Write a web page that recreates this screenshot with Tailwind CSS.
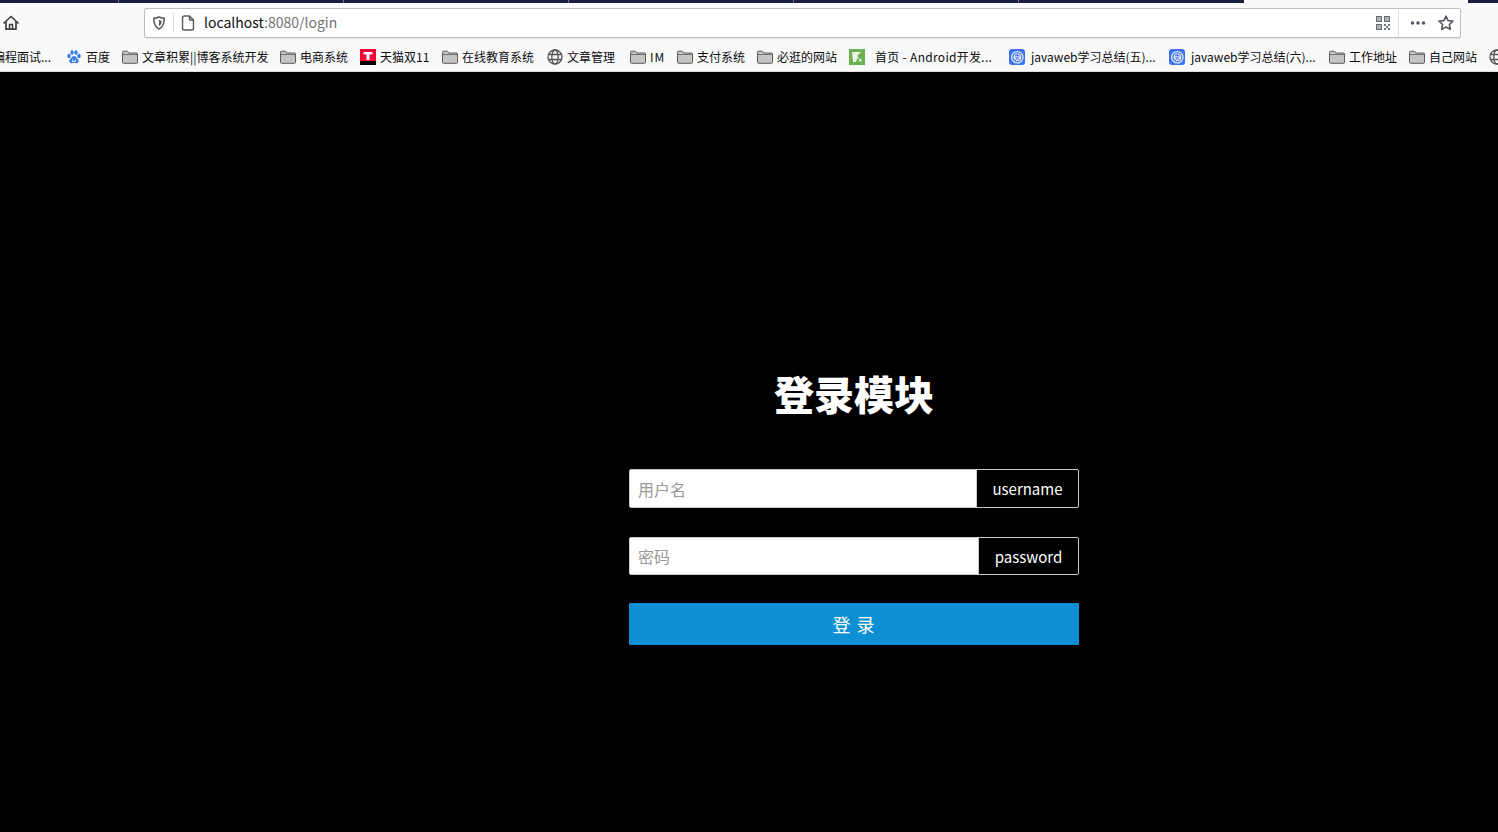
<!DOCTYPE html>
<html lang="zh-CN">
<head>
<meta charset="utf-8">
<title>登录</title>
<script src="https://cdn.jsdelivr.net/npm/@tailwindcss/browser@4"></script>
</head>
<body class="h-[832px] w-[1498px] overflow-hidden bg-black font-['Noto_Sans_CJK_SC','Noto_Sans',sans-serif]">
<svg width="0" height="0" class="absolute">
  <defs>
    <symbol id="folder" viewBox="0 0 16 16"><path d="M.5 3.2q0-1 1-1h4l1.500 1.800h7.500q1 0 1 1v8.300q0 1-1 1h-13q-1 0-1-1z" fill="#c4c4c4" stroke="#5c5c5c"/><path d="M1 5.500h14" stroke="#5c5c5c" stroke-width=".8"/></symbol>
    <symbol id="globe" viewBox="0 0 16 16"><g fill="none" stroke="#555" stroke-width="1.300"><circle cx="8" cy="8" r="7"/><ellipse cx="8" cy="8" rx="3.200" ry="7"/><path d="M1.500 5.500h13M1.500 10.500h13"/></g></symbol>
    <symbol id="blue" viewBox="0 0 16 16"><rect width="16" height="16" rx="3" fill="#3a72ee"/><circle cx="8.300" cy="8.300" r="6.300" fill="#dfe8fb"/><circle cx="8.300" cy="8.300" r="4.500" fill="none" stroke="#3a66d8" stroke-width="1.100"/><path d="M6 6.300h4.600M8.300 4.500v3M6.200 11l4.200-3.500M6.200 8l4.200 3" stroke="#3a66d8" stroke-width=".9" fill="none"/></symbol>
  </defs>
</svg>

<!-- tab strip -->
<div class="flex h-[3px] bg-[#1c1c3c]">
  <div class="w-[119px] border-r border-[#77778f]"></div>
  <div class="w-[225px] border-r border-[#77778f]"></div>
  <div class="w-[225px] border-r border-[#77778f]"></div>
  <div class="w-[225px] border-r border-[#77778f]"></div>
  <div class="w-[225px] border-r border-[#77778f]"></div>
  <div class="w-[225px]"></div>
  <div class="w-[224px] bg-[#f9f9fa]"></div>
</div>

<!-- toolbar -->
<div class="flex h-[39px] items-center bg-[#f9f9fa]">
  <svg class="ml-[3px] size-4" viewBox="0 0 16 16" fill="none" stroke="#3f3f46" stroke-width="1.700" stroke-linejoin="round" stroke-linecap="round"><path d="M1 8l7-6.500L15 8"/><path d="M3 7v7.200h10V7"/><path d="M6.500 14V9.500h3V14" stroke-width="1.500"/></svg>
  <div class="ml-[125px] flex h-[30px] w-[1317px] items-center rounded-[2px] border border-[#bdbdbd] bg-white shadow-[0_1px_1px_rgba(0,0,0,.08)]">
    <svg class="ml-[7px] size-[14px]" viewBox="0 0 16 16" fill="none" stroke="#5b5b66" stroke-width="1.800"><path d="M8 1.200c2 .9 4 1.300 6 1.300 0 6-1.500 10-6 12.300C3.500 12.500 2 8.500 2 2.500c2 0 4-.4 6-1.300z"/><path d="M8 4.500c1 .4 2 .6 3 .6 0 3.200-.8 5.300-3 6.600z" fill="#5b5b66" stroke="none"/></svg>
    <div class="ml-[7px] h-5 w-px bg-[#e0e0e2]"></div>
    <svg class="ml-[6px] size-4" viewBox="0 0 16 16" fill="none" stroke="#5b5b66" stroke-width="1.500" stroke-linejoin="round"><path d="M2.500 3q0-2 2-2h5L13.500 5v8q0 2-2 2h-7q-2 0-2-2z"/><path d="M9.500 1v4h4"/></svg>
    <div class="ml-[8px] pb-[2px] text-[14px] leading-none text-[#0c0c0d]">localhost<span class="text-[#737373]">:8080/login</span></div>
    <svg class="ml-auto size-4" viewBox="0 0 16 16" fill="#6b6f78"><path d="M1 1h6v6H1zm1.500 1.500v3h3v-3zM9 1h6v6H9zm1.500 1.500v3h3v-3zM1 9h6v6H1zm1.500 1.500v3h3v-3z" fill-rule="evenodd"/><path d="M3.300 3.300h1.400v1.400H3.300zM11.300 3.300h1.400v1.400h-1.400zM3.300 11.300h1.400v1.400H3.300zM9 9h2v2H9zM13 9h2v2h-2zM11 11h2v2h-2zM9 13h2v2H9zM13 13h2v2h-2z"/></svg>
    <div class="ml-[7px] h-[26px] w-px bg-[#e0e0e2]"></div>
    <svg class="ml-[11px] size-4" viewBox="0 0 16 16" fill="#5b5b66"><circle cx="2.500" cy="8" r="1.800"/><circle cx="8" cy="8" r="1.800"/><circle cx="13.500" cy="8" r="1.800"/></svg>
    <svg class="ml-[12px] mr-[6px] size-4" viewBox="0 0 16 16" fill="none" stroke="#5b5b66" stroke-width="1.700" stroke-linejoin="round"><path d="M8 1.200l2.100 4.400 4.800.6-3.500 3.300.9 4.800L8 12l-4.300 2.300.9-4.800L1.100 6.200l4.800-.6z"/></svg>
  </div>
</div>

<!-- bookmarks -->
<div class="flex h-[30px] items-center overflow-hidden whitespace-nowrap border-b border-[#dcdcdc] bg-[#f9f9fa] text-[12px] leading-none text-[#0c0c0d]">
  <div class="-ml-[7px] w-[73px] shrink-0">编程面试...</div>
  <div class="flex w-[56px] shrink-0 items-center">
    <svg class="mr-[4px] size-4 shrink-0" viewBox="0 0 16 16" fill="#3b7de8"><ellipse cx="3" cy="7" rx="1.700" ry="2.200"/><ellipse cx="6" cy="3.500" rx="1.700" ry="2.300"/><ellipse cx="10" cy="3.500" rx="1.700" ry="2.300"/><ellipse cx="13" cy="7" rx="1.700" ry="2.200"/><path d="M8 7c2 0 2.500 2 4 3.200 1.500 1.300.6 4-1.500 4-1 0-1.700-.4-2.500-.4s-1.500.4-2.500.4c-2.100 0-3-2.700-1.500-4C5.500 9 6 7 8 7z"/><path d="M6.500 10.500v2h3v-2" fill="none" stroke="#fff" stroke-width=".8"/></svg>百度</div>
  <div class="flex w-[158px] shrink-0 items-center"><svg class="mr-[4px] size-4 shrink-0"><use href="#folder"/></svg>文章积累||博客系统开发</div>
  <div class="flex w-[80px] shrink-0 items-center"><svg class="mr-[4px] size-4 shrink-0"><use href="#folder"/></svg>电商系统</div>
  <div class="flex w-[82px] shrink-0 items-center">
    <svg class="mr-[4px] size-4 shrink-0" viewBox="0 0 16 16"><rect width="16" height="16" fill="#ff0036"/><rect y="12" width="16" height="4" fill="#000"/><path d="M3.500 3h9v2.500H9.500V11h-3V5.500h-3z" fill="#fff"/></svg>天猫双11</div>
  <div class="flex w-[105px] shrink-0 items-center"><svg class="mr-[4px] size-4 shrink-0"><use href="#folder"/></svg>在线教育系统</div>
  <div class="flex w-[83px] shrink-0 items-center"><svg class="mr-[4px] size-4 shrink-0"><use href="#globe"/></svg>文章管理</div>
  <div class="flex w-[47px] shrink-0 items-center"><svg class="mr-[4px] size-4 shrink-0"><use href="#folder"/></svg><span class="tracking-[1px]">IM</span></div>
  <div class="flex w-[80px] shrink-0 items-center"><svg class="mr-[4px] size-4 shrink-0"><use href="#folder"/></svg>支付系统</div>
  <div class="flex w-[92px] shrink-0 items-center"><svg class="mr-[4px] size-4 shrink-0"><use href="#folder"/></svg>必逛的网站</div>
  <div class="flex w-[160px] shrink-0 items-center">
    <svg class="mr-[10px] size-4 shrink-0" viewBox="0 0 16 16"><rect width="16" height="16" fill="#6cb14f"/><path d="M3 3h9L8 7l2 2-2 1-1 3-3 0z" fill="#eef5e8"/><rect x="10" y="10" width="2.500" height="2.500" fill="#eef5e8"/></svg><span class="tracking-[.3px]">首页 - Android开发...</span></div>
  <div class="flex w-[160px] shrink-0 items-center"><svg class="mr-[6px] size-4 shrink-0"><use href="#blue"/></svg>javaweb学习总结(五)...</div>
  <div class="flex w-[160px] shrink-0 items-center"><svg class="mr-[6px] size-4 shrink-0"><use href="#blue"/></svg>javaweb学习总结(六)...</div>
  <div class="flex w-[80px] shrink-0 items-center"><svg class="mr-[4px] size-4 shrink-0"><use href="#folder"/></svg>工作地址</div>
  <div class="flex w-[80px] shrink-0 items-center"><svg class="mr-[4px] size-4 shrink-0"><use href="#folder"/></svg>自己网站</div>
  <svg class="size-4 shrink-0"><use href="#globe"/></svg>
</div>

<!-- page -->
<main class="h-[760px] bg-black pl-[629px] pt-[291px] text-white">
  <form class="w-[450px]">
    <h1 class="h-[60px] text-center text-[40px] font-black leading-[60px]">登录模块</h1>
    <div class="mt-[46px] flex h-[39px] rounded-[2px] border border-[#c8c8c8]">
      <input class="min-w-0 flex-1 bg-white px-2 text-[16px] text-black outline-none placeholder:text-[#999]" placeholder="用户名">
      <span class="flex w-[102px] items-center justify-center border-l border-[#c8c8c8] pt-[2px] text-[15px]">username</span>
    </div>
    <div class="mt-[29px] flex h-[38px] rounded-[2px] border border-[#c8c8c8]">
      <input class="min-w-0 flex-1 bg-white px-2 text-[16px] text-black outline-none placeholder:text-[#999]" placeholder="密码">
      <span class="flex w-[100px] items-center justify-center border-l border-[#c8c8c8] pt-[2px] text-[15px]">password</span>
    </div>
    <button type="button" class="mt-[28px] block h-[42px] w-full rounded-[1px] bg-[#0f8fd3] text-[18px] tracking-[1px] text-white">登 录</button>
  </form>
</main>
</body>
</html>
